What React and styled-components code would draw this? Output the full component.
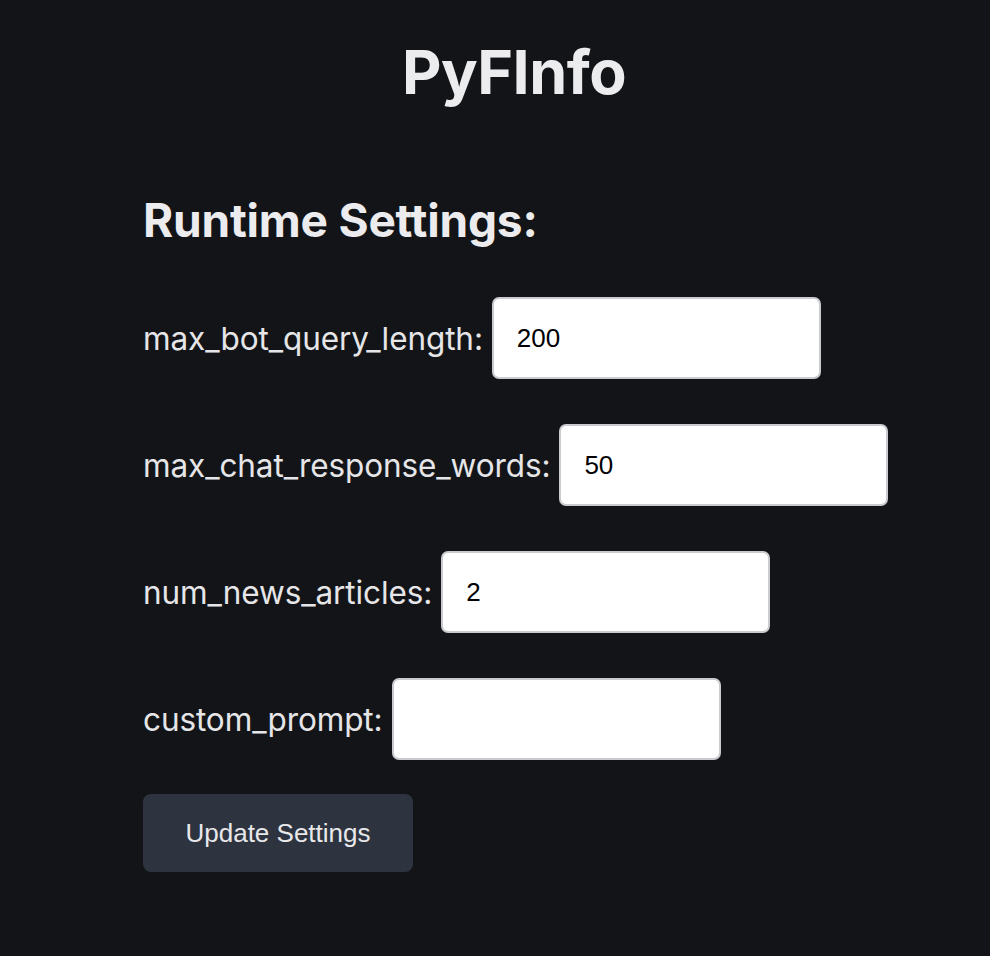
import React from 'react'
import styled, { createGlobalStyle } from 'styled-components'

const GlobalStyle = createGlobalStyle`
  html, body {
    margin: 0;
    padding: 0;
    background: #121418;
  }
  body {
    font-family: Inter, "Liberation Sans", sans-serif;
    color: #e8e8ea;
  }
`

const settings = [
  { name: 'max_bot_query_length', value: '200' },
  { name: 'max_chat_response_words', value: '50' },
  { name: 'num_news_articles', value: '2' },
  { name: 'custom_prompt', value: '' },
]

const App = () => {
  return (
    <Page>
      <GlobalStyle />
      <Title>PyFInfo</Title>
      <Section>
        <Heading>Runtime Settings:</Heading>
        <Form onSubmit={(e) => e.preventDefault()}>
          {settings.map((s) => (
            <Row key={s.name}>
              <Label htmlFor={s.name}>{s.name}:</Label>
              <Input id={s.name} type="text" defaultValue={s.value} />
            </Row>
          ))}
          <Button type="submit">Update Settings</Button>
        </Form>
      </Section>
    </Page>
  )
}

export default App

const Page = styled.div`
  min-height: 956px;
  box-sizing: border-box;
  padding-top: 32px;
`

const Title = styled.h1`
  margin: 0;
  padding-left: 38px;
  text-align: center;
  font-size: 61px;
  font-weight: 700;
  letter-spacing: -0.5px;
  line-height: 80px;
  color: #ececee;
`

const Section = styled.section`
  padding-left: 143px;
  padding-top: 80px;
`

const Heading = styled.h2`
  margin: 0;
  font-size: 46px;
  font-weight: 700;
  letter-spacing: -0.2px;
  line-height: 56px;
  color: #ececee;
`

const Form = styled.form`
  display: flex;
  flex-direction: column;
  align-items: flex-start;
  gap: 45px;
  margin-top: 49px;
`

const Row = styled.div`
  display: flex;
  align-items: center;
  gap: 9px;
`

const Label = styled.label`
  font-size: 31.5px;
  font-weight: 400;
  letter-spacing: -0.1px;
  color: #e6e6e8;
`

const Input = styled.input`
  box-sizing: border-box;
  width: 329px;
  height: 82px;
  padding: 0 23px;
  border: 2px solid #c9cbcf;
  border-radius: 7px;
  background: #fff;
  color: #000;
  font-family: "Liberation Sans", Arial, sans-serif;
  font-size: 26px;
  outline: none;
`

const Button = styled.button`
  margin-top: -11px;
  width: 270px;
  height: 78px;
  border: none;
  border-radius: 8px;
  background: #2d3440;
  color: #e8e8ea;
  font-family: "Liberation Sans", Arial, sans-serif;
  font-size: 26px;
  cursor: pointer;
`
